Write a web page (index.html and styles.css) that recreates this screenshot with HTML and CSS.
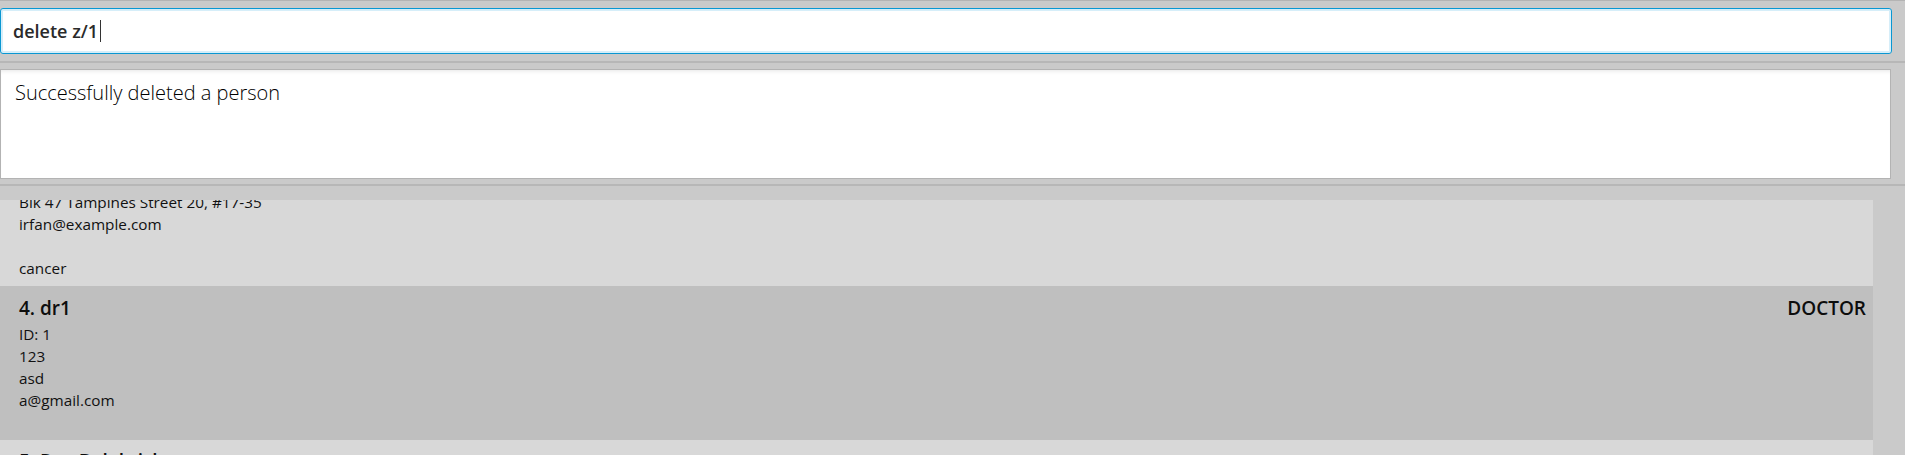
FILE: index.html
```html
<!DOCTYPE html>
<html>
<head>
<meta charset="utf-8">
<link rel="stylesheet" href="styles.css">
</head>
<body>
<div class="app">
  <div class="topline"></div>
  <div class="command-pane">
    <div class="command-box"><span class="command-text">delete z/1</span><span class="caret"></span></div>
  </div>
  <div class="separator"></div>
  <div class="result-pane">
    <div class="result-box">Successfully deleted a person</div>
  </div>
  <div class="separator"></div>
  <div class="list-pane">
    <div class="list-viewport">
      <div class="list-inner">
        <div class="card card-light">
          <div class="card-head"><span class="card-name">3. Irfan Ibrahim</span><span class="card-role">PATIENT</span></div>
          <div class="card-line">ID: 3</div>
          <div class="card-line">92492021</div>
          <div class="card-line">Blk 47 Tampines Street 20, #17-35</div>
          <div class="card-line">irfan@example.com</div>
          <div class="card-line"></div>
          <div class="card-line">cancer</div>
        </div>
        <div class="card card-dark">
          <div class="card-head"><span class="card-name">4. dr1</span><span class="card-role">DOCTOR</span></div>
          <div class="card-line">ID: 1</div>
          <div class="card-line">123</div>
          <div class="card-line">asd</div>
          <div class="card-line">a@gmail.com</div>
          <div class="card-line"></div>
        </div>
        <div class="card card-light card-next">
          <div class="card-head"><span class="card-name">5. Roy Balakrishnan</span></div>
          <div class="card-line">ID: 5</div>
        </div>
      </div>
    </div>
    <div class="scroll-gutter"></div>
  </div>
</div>
</body>
</html>
```
FILE: styles.css
```css
html, body {
  margin: 0;
  padding: 0;
  background: #cacaca;
  overflow: hidden;
}
.app {
  width: 1905px;
  height: 455px;
  display: flex;
  flex-direction: column;
  font-family: "Open Sans", "Noto Sans", sans-serif;
  color: #111;
}
.topline {
  height: 1px;
  background: #b4b4b4;
}
.command-pane {
  padding: 7px 13px 7px 0;
}
.command-box {
  height: 44px;
  background: #fff;
  border: 1px solid #0a97d2;
  border-radius: 3px;
  box-shadow: inset 0 0 0 2px #d6eef9;
  display: flex;
  align-items: center;
  padding-left: 12px;
  font-size: 18px;
  font-weight: 600;
  color: #2a2a2a;
}
.caret {
  width: 1px;
  height: 22px;
  background: #333;
  margin-left: 2px;
}
.separator {
  height: 2px;
  background: #b7b7b7;
}
.result-pane {
  padding: 6px 14px 5px 0;
}
.result-box {
  height: 98px;
  background: #fff;
  border: 1px solid #b3b3b3;
  box-shadow: inset 0 4px 4px -3px rgba(0, 0, 0, 0.10);
  padding: 10px 14px 0;
  font-size: 20px;
  line-height: 26px;
  font-weight: 300;
  color: #000;
}
.list-pane {
  flex: 1;
  display: flex;
  padding-top: 14px;
  min-height: 0;
}
.list-viewport {
  width: 1873px;
  overflow: hidden;
}
.list-inner {
  margin-top: -90px;
}
.scroll-gutter {
  flex: 1;
}
.card {
  padding: 7px 7px 7px 19px;
}
.card-light {
  background: #d8d8d8;
}
.card-dark {
  background: #bfbfbf;
}
.card-next {
  padding-top: 6px;
}
.card-head {
  display: flex;
  justify-content: space-between;
  font-size: 19px;
  line-height: 30px;
  font-weight: 600;
  color: #0d0d0d;
}
.card-line {
  font-size: 15.3px;
  line-height: 22px;
  height: 22px;
  color: #111;
}
```
